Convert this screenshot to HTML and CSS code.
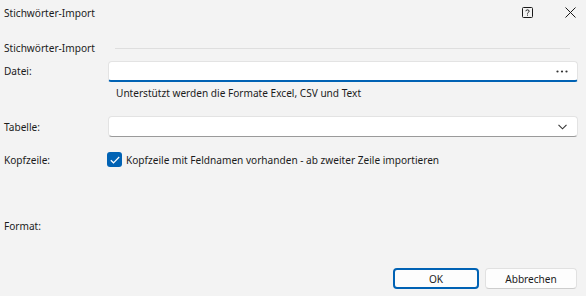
FILE: index.html
```html
<!DOCTYPE html>
<html lang="de">
<head>
<meta charset="utf-8">
<link rel="stylesheet" href="styles.css">
</head>
<body>
<div class="dialog">
  <div class="titlebar">
    <span class="title">Stichwörter-Import</span>
    <div class="title-icons">
      <svg class="help" width="11" height="11" viewBox="0 0 11 11"><rect x="0.5" y="0.5" width="10" height="10" rx="1" fill="none" stroke="#1a1a1a"/><path d="M3.8 4.2 C3.8 2.4 7.2 2.4 7.2 4.2 C7.2 5.3 5.5 5.3 5.5 6.6" fill="none" stroke="#1a1a1a" stroke-width="1"/><rect x="5" y="7.6" width="1" height="1" fill="#1a1a1a"/></svg>
      <svg class="close" width="11" height="11" viewBox="0 0 11 11"><path d="M0.5 0.5 L10.5 10.5 M10.5 0.5 L0.5 10.5" stroke="#1a1a1a" stroke-width="1"/></svg>
    </div>
  </div>
  <div class="group">
    <span class="group-title">Stichwörter-Import</span>
    <span class="group-line"></span>
  </div>
  <div class="row row-file">
    <label class="label">Datei:</label>
    <div class="field">
      <div class="input active">
        <svg class="dots" width="12" height="3" viewBox="0 0 12 3"><circle cx="1.5" cy="1.5" r="1.1" fill="#333"/><circle cx="6" cy="1.5" r="1.1" fill="#333"/><circle cx="10.5" cy="1.5" r="1.1" fill="#333"/></svg>
      </div>
      <div class="hint">Unterstützt werden die Formate Excel, CSV und Text</div>
    </div>
  </div>
  <div class="row row-table">
    <label class="label">Tabelle:</label>
    <div class="field">
      <div class="input">
        <svg class="chev" width="9" height="6" viewBox="0 0 9 6"><path d="M0.5 0.8 L4.5 4.8 L8.5 0.8" fill="none" stroke="#333" stroke-width="1.1"/></svg>
      </div>
    </div>
  </div>
  <div class="row row-head">
    <label class="label">Kopfzeile:</label>
    <div class="check-wrap">
      <span class="checkbox"><svg width="10" height="8" viewBox="0 0 10 8"><path d="M0.8 4.2 L3.5 6.8 L9.2 1" fill="none" stroke="#fff" stroke-width="1.2"/></svg></span>
      <span class="check-text">Kopfzeile mit Feldnamen vorhanden - ab zweiter Zeile importieren</span>
    </div>
  </div>
  <div class="row row-format">
    <label class="label">Format:</label>
  </div>
  <div class="buttons">
    <button class="btn primary">OK</button>
    <button class="btn">Abbrechen</button>
  </div>
</div>
</body>
</html>
```
FILE: styles.css
```css
* { box-sizing: border-box; }
html, body { margin: 0; padding: 0; }
body {
  width: 586px;
  height: 296px;
  background: #f3f3f3;
  font-family: "Noto Sans", "Open Sans", sans-serif;
  font-size: 10.1px;
  color: #1b1b1b;
  overflow: hidden;
}
.dialog { display: flex; flex-direction: column; height: 296px; }
.titlebar {
  height: 25px;
  display: flex;
  align-items: center;
  justify-content: space-between;
  padding: 0 10px 0 4px;
}
.title-icons { display: flex; align-items: center; gap: 32px; }
.group {
  display: flex;
  align-items: center;
  margin-top: 16px;
  padding: 0 16px 0 4px;
  height: 14px;
}
.group-title { flex: none; }
.group-line { flex: 1; height: 1px; background: #dedede; margin-left: 20px; margin-top: 1px; }
.row { display: flex; padding: 0 8px 0 4px; }
.label { width: 104px; flex: none; }
.field { flex: 1; display: flex; flex-direction: column; }
.input {
  height: 21px;
  background: #fff;
  border: 1px solid #e3e3e3;
  border-bottom-color: #9a9a9a;
  border-radius: 4px;
  display: flex;
  align-items: center;
  justify-content: flex-end;
  padding-right: 10px;
}
.input.active { border-bottom: 2px solid #0062b4; border-bottom-left-radius: 3px; border-bottom-right-radius: 3px; padding-right: 9px; }
.dots { margin-top: 1px; }
.row-file { margin-top: 6px; }
.row-file .label { padding-top: 3px; }
.hint { padding-left: 8px; margin-top: 4px; line-height: 15px; }
.row-table { margin-top: 15px; }
.row-table .label { padding-top: 4px; }
.row-head { margin-top: 15px; align-items: center; }
.check-wrap { display: flex; align-items: center; gap: 4px; margin-left: -1px; }
.checkbox {
  width: 15px; height: 15px;
  background: #0062b4;
  border-radius: 3px;
  display: flex; align-items: center; justify-content: center;
}
.row-format { margin-top: 52px; }
.buttons {
  margin-top: auto;
  margin-bottom: 7px;
  display: flex;
  justify-content: flex-end;
  gap: 6px;
  padding-right: 9px;
}
.btn {
  font-family: inherit;
  font-size: 10.1px;
  color: #1b1b1b;
  width: 86px;
  height: 21px;
  background: #fdfdfd;
  border: 1px solid #e1e1e1;
  border-bottom-color: #cdcdcd;
  border-radius: 4px;
  padding: 0;
}
.btn + .btn { width: 92px; }
.btn.primary { border: 2px solid #0062b4; }
```
